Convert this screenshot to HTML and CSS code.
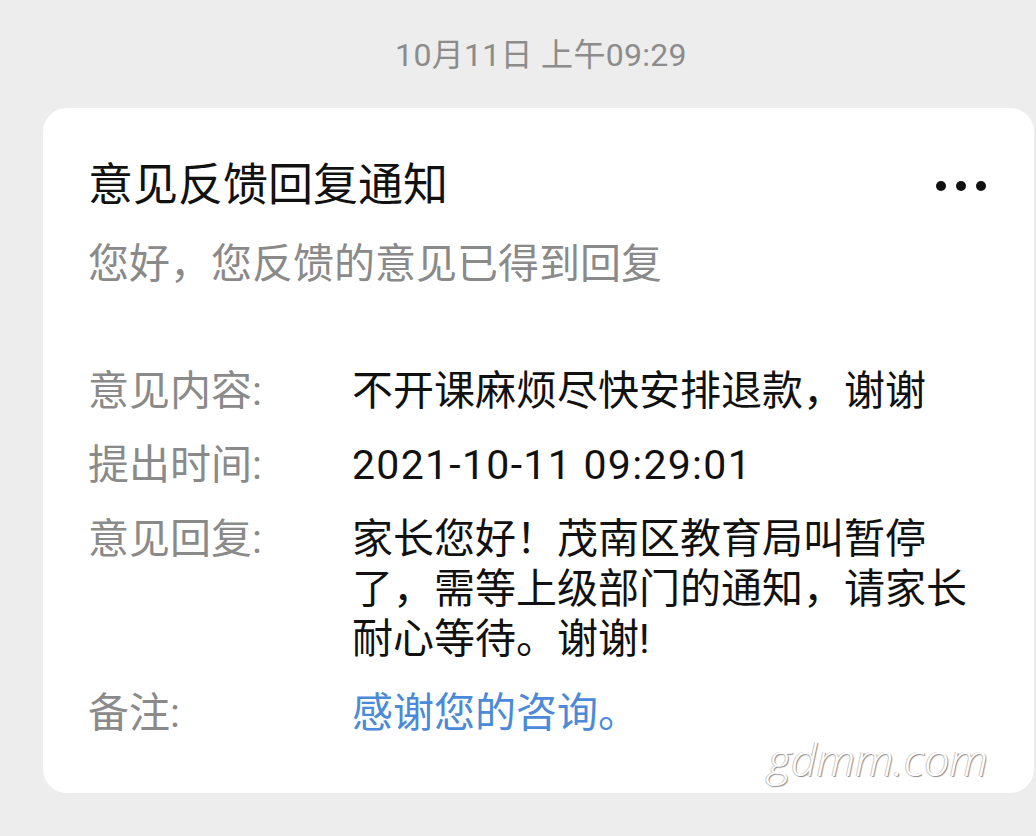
FILE: index.html
```html
<!DOCTYPE html>
<html lang="zh-CN">
<head>
    <meta charset="UTF-8">
    <meta name="viewport" content="width=device-width, initial-scale=1.0">
    <title>意见反馈回复通知</title>
    <link rel="stylesheet" href="styles.css">
</head>
<body>
    <div class="msg-time">10月11日 上午09:29</div>

    <div class="card">
        <div class="card-header">
            <h1 class="card-title">意见反馈回复通知</h1>
            <div class="more"><span></span><span></span><span></span></div>
        </div>
        <p class="card-sub">您好，您反馈的意见已得到回复</p>

        <div class="rows">
            <div class="row">
                <div class="label">意见内容:</div>
                <div class="value">不开课麻烦尽快安排退款，谢谢</div>
            </div>
            <div class="row">
                <div class="label">提出时间:</div>
                <div class="value date">2021-10-11 09:29:01</div>
            </div>
            <div class="row">
                <div class="label">意见回复:</div>
                <div class="value">家长您好！茂南区教育局叫暂停了，需等上级部门的通知，请家长耐心等待。谢谢!</div>
            </div>
            <div class="row">
                <div class="label">备注:</div>
                <div class="value link">感谢您的咨询。</div>
            </div>
        </div>

        <div class="watermark">gdmm.com</div>
    </div>
</body>
</html>
```

FILE: styles.css
```css
body {
    margin: 0;
    background-color: #ededed;
    font-family: Roboto, "Noto Sans CJK SC", sans-serif;
}
.msg-time {
    text-align: center;
    font-size: 32px;
    line-height: 40px;
    color: #8c8c8c;
    padding: 35px 0 0 46px;
    height: 73px;
    letter-spacing: 0.3px;
}
.card {
    position: relative;
    background-color: #fff;
    margin: 0 2px 0 43px;
    border-radius: 24px;
    height: 635px;
    padding: 50px 48px 0 45px;
}
.card-header {
    display: flex;
    justify-content: space-between;
    align-items: center;
}
.card-title {
    margin: 0;
    font-size: 45px;
    line-height: 56px;
    font-weight: normal;
    color: #111;
}
.more {
    display: flex;
    gap: 10px;
}
.more span {
    width: 10px;
    height: 10px;
    border-radius: 50%;
    background-color: #111;
}
.card-sub {
    margin: 24px 0 0;
    font-size: 41px;
    line-height: 52px;
    color: #8a8a8a;
}
.rows {
    margin-top: 76px;
    display: flex;
    flex-direction: column;
    gap: 24px;
}
.row {
    display: flex;
    font-size: 41px;
    line-height: 50px;
}
.label {
    width: 264px;
    flex-shrink: 0;
    color: #8a8a8a;
}
.value {
    max-width: 630px;
    color: #111;
}
.value.date {
    letter-spacing: 1.3px;
}
.value.link {
    color: #4a8ad8;
}
.watermark {
    position: absolute;
    right: 46px;
    bottom: 4px;
    font-family: "Open Sans", sans-serif;
    font-style: italic;
    font-weight: 300;
    font-size: 45px;
    color: #fff;
    text-shadow: 1px 1px 1px #8a8a8a, -1px 0 0 #c8c8c8;
}
```
